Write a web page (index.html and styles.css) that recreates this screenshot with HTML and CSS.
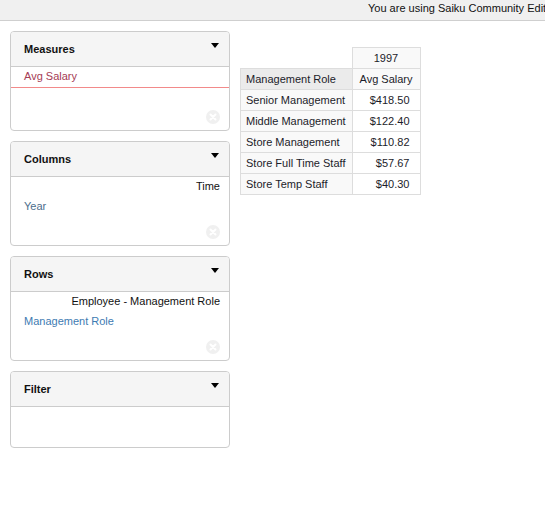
FILE: index.html
```html
<!DOCTYPE html>
<html>
<head>
<meta charset="utf-8">
<link rel="stylesheet" href="styles.css">
</head>
<body>
<div class="topbar"><span class="topbar-text">You are using Saiku Community Edition, please consider upgrading</span></div>
<div class="main">
  <div class="sidebar">
    <div class="panel">
      <div class="panel-header"><span class="panel-title">Measures</span><span class="caret"></span></div>
      <div class="panel-body body-measures">
        <div class="measure-item">Avg Salary</div>
        <span class="clear-btn"><svg width="14" height="14" viewBox="0 0 14 14"><circle cx="7" cy="7" r="7" fill="#f0f0f0"/><path d="M4.5 4.5 L9.5 9.5 M9.5 4.5 L4.5 9.5" stroke="#fff" stroke-width="2" stroke-linecap="round"/></svg></span>
      </div>
    </div>
    <div class="panel">
      <div class="panel-header"><span class="panel-title">Columns</span><span class="caret"></span></div>
      <div class="panel-body body-axis">
        <div class="dim-title">Time</div>
        <div class="level-item">Year</div>
        <span class="clear-btn"><svg width="14" height="14" viewBox="0 0 14 14"><circle cx="7" cy="7" r="7" fill="#f0f0f0"/><path d="M4.5 4.5 L9.5 9.5 M9.5 4.5 L4.5 9.5" stroke="#fff" stroke-width="2" stroke-linecap="round"/></svg></span>
      </div>
    </div>
    <div class="panel">
      <div class="panel-header"><span class="panel-title">Rows</span><span class="caret"></span></div>
      <div class="panel-body body-axis">
        <div class="dim-title">Employee - Management Role</div>
        <div class="level-item level-blue">Management Role</div>
        <span class="clear-btn"><svg width="14" height="14" viewBox="0 0 14 14"><circle cx="7" cy="7" r="7" fill="#f0f0f0"/><path d="M4.5 4.5 L9.5 9.5 M9.5 4.5 L4.5 9.5" stroke="#fff" stroke-width="2" stroke-linecap="round"/></svg></span>
      </div>
    </div>
    <div class="panel">
      <div class="panel-header"><span class="panel-title">Filter</span><span class="caret"></span></div>
      <div class="panel-body body-filter"></div>
    </div>
  </div>
  <div class="content">
    <table class="result">
      <tr>
        <td class="empty"></td>
        <td class="col-head">1997</td>
      </tr>
      <tr>
        <td class="row-head-title">Management Role</td>
        <td class="col-head">Avg Salary</td>
      </tr>
      <tr><td class="row-head">Senior Management</td><td class="val">$418.50</td></tr>
      <tr><td class="row-head">Middle Management</td><td class="val">$122.40</td></tr>
      <tr><td class="row-head">Store Management</td><td class="val">$110.82</td></tr>
      <tr><td class="row-head">Store Full Time Staff</td><td class="val">$57.67</td></tr>
      <tr><td class="row-head">Store Temp Staff</td><td class="val">$40.30</td></tr>
    </table>
  </div>
</div>
</body>
</html>
```
FILE: styles.css
```css
html, body {
  margin: 0;
  padding: 0;
  background: #fff;
  font-family: "Liberation Sans", Arial, sans-serif;
  font-size: 11px;
  color: #111;
}
.topbar {
  height: 20px;
  background: #f0f0f0;
  border-bottom: 1px solid #cfcfcf;
  white-space: nowrap;
  overflow: hidden;
  padding-left: 368px;
  line-height: 16px;
  color: #111;
}
.main {
  display: flex;
  gap: 10px;
  padding: 10px;
  align-items: flex-start;
}
.sidebar {
  width: 220px;
  display: flex;
  flex-direction: column;
  gap: 10px;
}
.panel {
  border: 1px solid #cccccc;
  border-radius: 4px;
  overflow: hidden;
  background: #fff;
}
.panel-header {
  height: 34px;
  background: #f5f5f5;
  border-bottom: 1px solid #cccccc;
  display: flex;
  align-items: center;
  justify-content: space-between;
  padding: 0 10px 0 13px;
}
.panel-title {
  font-weight: bold;
  color: #111;
}
.caret {
  width: 0;
  height: 0;
  border-left: 4.5px solid transparent;
  border-right: 4.5px solid transparent;
  border-top: 5px solid #000;
  align-self: flex-start;
  margin-top: 11px;
}
.panel-body {
  position: relative;
}
.body-measures {
  height: 63px;
}
.body-axis {
  height: 68px;
  padding-top: 1px;
  box-sizing: border-box;
}
.body-filter {
  height: 40px;
}
.measure-item {
  height: 20px;
  line-height: 19px;
  padding-left: 13px;
  color: #a63c55;
  border-bottom: 1px solid #f28a8a;
}
.dim-title {
  text-align: right;
  padding-right: 9px;
  line-height: 16px;
  height: 16px;
  color: #111;
}
.level-item {
  padding-left: 13px;
  line-height: 16px;
  margin-top: 4px;
  color: #4d6e8c;
}
.level-blue {
  color: #3e7bb2;
}
.clear-btn {
  position: absolute;
  right: 9px;
  bottom: 6px;
  width: 14px;
  height: 14px;
  display: block;
}
.clear-btn svg {
  display: block;
}
.content {
  padding-top: 16px;
}
.result {
  border-collapse: collapse;
  font-size: 11px;
  color: #1c1c2a;
}
.result td {
  border: 1px solid #dddddd;
  height: 20px;
  padding: 0;
  white-space: nowrap;
}
.result td.empty {
  border: none;
  width: 111px;
}
.result td.col-head {
  background: #f9f9f9;
  text-align: center;
  width: 67px;
}
.result td.row-head-title {
  background: #ebebeb;
  padding-left: 5px;
}
.result td.row-head {
  background: #f9f9f9;
  padding-left: 5px;
}
.result td.val {
  text-align: right;
  padding-right: 10px;
  background: #fff;
}
```
